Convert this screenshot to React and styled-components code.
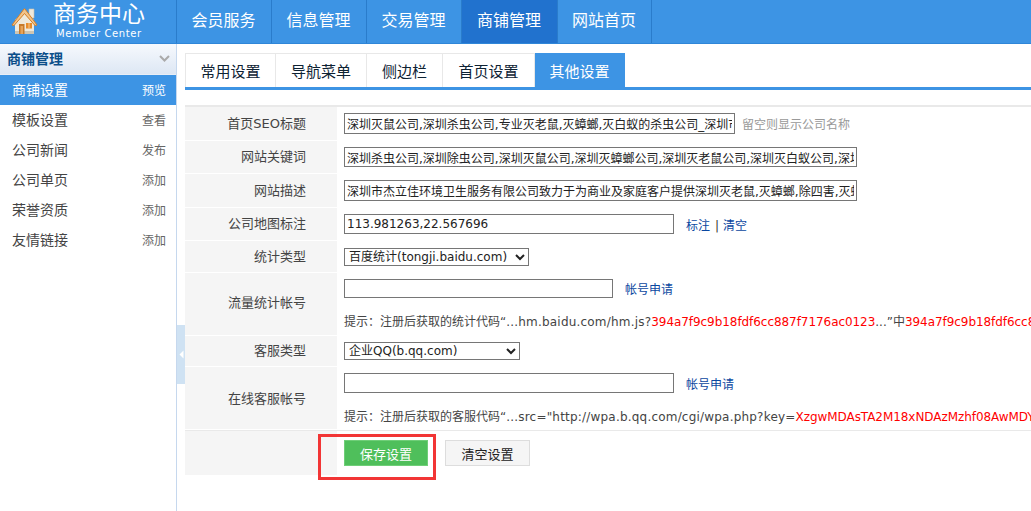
import React from 'react';
import styled, { createGlobalStyle } from 'styled-components';

const GlobalStyle = createGlobalStyle`
    html, body {
        margin: 0;
        height: 100%;
        overflow: hidden;
        background: #fff;
    }
    body {
        font-family: "DejaVu Sans", "Noto Sans CJK SC", sans-serif;
        font-size: 12px;
        color: #333;
    }
`;

const Page = styled.div`
    width: 1031px;
    height: 511px;
    display: flex;
    flex-direction: column;
    overflow: hidden;
`;

const Header = styled.header`
    height: 44px;
    flex: none;
    display: flex;
    background: #3d94e4;
    border-bottom: 1px solid #2f86d8;
    box-sizing: border-box;
`;

const Logo = styled.div`
    width: 176px;
    flex: none;
    display: flex;
    padding: 2px 0 0 11px;
    box-sizing: border-box;
    gap: 15px;
    color: #fff;
`;

const LogoText = styled.div`
    display: flex;
    flex-direction: column;
`;

const LogoTitle = styled.div`
    font-size: 23px;
    line-height: 25px;
    white-space: nowrap;
`;

const LogoSub = styled.div`
    font-size: 10px;
    line-height: 12px;
    letter-spacing: 0.6px;
    margin: 1px 0 0 3px;
    white-space: nowrap;
`;

const Nav = styled.nav`
    display: flex;
    border-right: 1px solid #2a7ccb;
`;

const NavItem = styled.div`
    width: ${p => p.$width}px;
    box-sizing: border-box;
    border-left: 1px solid #2a7ccb;
    display: flex;
    align-items: center;
    justify-content: center;
    padding: 0 1px 6px 0;
    font-size: 16px;
    color: #fff;
    background: ${p => (p.$active ? '#2172ce' : 'transparent')};
`;

const Body = styled.div`
    flex: 1;
    display: flex;
    min-height: 0;
`;

const Sidebar = styled.aside`
    width: 177px;
    flex: none;
    box-sizing: border-box;
    border-right: 1px solid #c6d8ee;
    position: relative;
`;

const SideTitle = styled.div`
    height: 31px;
    padding: 0 6px 2px 7px;
    display: flex;
    align-items: center;
    justify-content: space-between;
    font-size: 14px;
    font-weight: bold;
    color: #0b4f8a;
    background: linear-gradient(#f6f9fd, #dde7f4);
    border-bottom: 1px solid #e9eef6;
    box-sizing: border-box;
`;

const SideItem = styled.div`
    height: 30px;
    box-sizing: border-box;
    padding: 0 10px 2px 12px;
    display: flex;
    align-items: center;
    justify-content: space-between;
    font-size: 14px;
    color: ${p => (p.$active ? '#fff' : '#444')};
    background: ${p => (p.$active ? '#3d94e4' : 'transparent')};
`;

const SideAction = styled.span`
    font-size: 12px;
    color: ${p => (p.$active ? '#fff' : '#666')};
`;

const Handle = styled.div`
    position: absolute;
    left: 177px;
    top: 281px;
    width: 8px;
    height: 59px;
    background: #cfe2f3;
    display: flex;
    align-items: center;
    justify-content: center;
`;

const Main = styled.main`
    flex: 1;
    min-width: 0;
    padding: 9px 0 0 8px;
    position: relative;
`;

const Tabs = styled.div`
    display: flex;
    height: 37px;
    box-sizing: border-box;
    border-bottom: 3px solid #3d94e4;
`;

const Tab = styled.div`
    width: ${p => p.$width}px;
    border: 1px solid #e8e8e8;
    border-width: 1px 1px 0 ${p => (p.$first ? '1px' : '0')};
    box-sizing: border-box;
    display: flex;
    align-items: center;
    justify-content: center;
    padding-bottom: 1px;
    font-size: 15px;
    color: ${p => (p.$active ? '#fff' : '#0d2233')};
    background: ${p => (p.$active ? '#3d94e4' : '#fff')};
    border-color: ${p => (p.$active ? '#3d94e4' : '#e8e8e8')};
`;

const Form = styled.div`
    margin-top: 15px;
    border-top: 2px solid #e9e9e9;
`;

const Row = styled.div`
    display: flex;
    height: ${p => p.$height}px;
    margin-bottom: 1px;
`;

const Label = styled.div`
    width: 152px;
    flex: none;
    box-sizing: border-box;
    background: #f5f5f5;
    padding: 0 31px ${p => p.$lift || 3}px 0;
    display: flex;
    align-items: center;
    justify-content: flex-end;
    font-size: 13px;
    color: #444;
    white-space: nowrap;
`;

const Value = styled.div`
    flex: 1;
    min-width: 0;
    padding-left: 7px;
    display: flex;
    align-items: center;
    white-space: nowrap;
`;

const StackValue = styled(Value)`
    flex-direction: column;
    align-items: flex-start;
    padding-top: 6px;
    gap: 17px;
`;

const Line = styled.div`
    display: flex;
    align-items: center;
    white-space: nowrap;
`;

const Input = styled.input`
    width: ${p => p.$width}px;
    height: ${p => p.$height || 20}px;
    box-sizing: border-box;
    border: 1px solid #767676;
    padding: 0 2px;
    margin: 0;
    font: 12px "DejaVu Sans", "Noto Sans CJK SC", sans-serif;
    color: #222;
    background: #fff;
    outline: none;
`;

const Select = styled.select`
    width: ${p => p.$width}px;
    height: 18px;
    box-sizing: border-box;
    border: 1px solid #767676;
    border-radius: 0;
    padding: 0;
    margin: 0;
    font: 12px "DejaVu Sans", "Noto Sans CJK SC", sans-serif;
    color: #222;
    background: #fff;
`;

const Hint = styled.span`
    margin-left: 7px;
    color: #999;
`;

const Links = styled.span`
    margin-left: 12px;
    color: #333;
`;

const LinkText = styled.a`
    color: #0a47a0;
    text-decoration: none;
`;

const Divider = styled.span`
    margin: 0 4px 0 5px;
`;

const Tip = styled.div`
    color: #444;
    line-height: 14px;
`;

const Url = styled.span`
    letter-spacing: 0.2px;
`;

const Red = styled.span`
    color: #f00;
    letter-spacing: -0.06px;
`;

const Footer = styled.div`
    display: flex;
    border-top: 1px solid #e9e9e9;
    height: 44px;
`;

const FooterGap = styled.div`
    width: 152px;
    flex: none;
    background: #f5f5f5;
`;

const Buttons = styled.div`
    padding: 9px 0 0 7px;
    display: flex;
    gap: 17px;
    align-items: flex-start;
`;

const Button = styled.button`
    width: ${p => p.$width}px;
    height: 26px;
    margin: 0;
    padding: 0;
    box-sizing: border-box;
    font: 13px "DejaVu Sans", "Noto Sans CJK SC", sans-serif;
    color: ${p => (p.$primary ? '#fff' : '#222')};
    background: ${p => (p.$primary ? '#4fbf5b' : '#f5f5f5')};
    border: 1px solid ${p => (p.$primary ? '#6fce78' : '#ddd')};
`;

const Annotation = styled.div`
    position: absolute;
    left: 141px;
    top: 390px;
    width: 118px;
    height: 46px;
    box-sizing: border-box;
    border: 3px solid #f23535;
    pointer-events: none;
`;

const HouseSvg = styled.svg`
    margin-top: 5px;
    flex: none;
`;

const HouseIcon = () => (
    <HouseSvg width="27" height="27" viewBox="0 0 27 27">
        <path d="M18 2 H23 V11 H18 Z" fill="#eee9dc" stroke="#c9bda6" strokeWidth="0.6" />
        <path d="M4 13 L13 4 L23 13 V26 Q23 27 22 27 H5 Q4 27 4 26 Z" fill="#efe9da" />
        <path d="M4 24 H23 V26 Q23 27 22 27 H5 Q4 27 4 26 Z" fill="#cfc5b1" />
        <path d="M1 18 L13 2 Q13.5 1.5 14 2 L26 18 L24 18.5 L13.5 6.5 L3 18.5 Z" fill="#f2c48a" stroke="#d67f24" strokeWidth="1" strokeLinejoin="round" />
        <rect x="8" y="17" width="5.5" height="10" fill="#c67a2a" />
        <rect x="9.5" y="19" width="2.5" height="8" fill="#e8a458" />
        <rect x="15" y="16" width="6" height="5.5" fill="#e88c2a" />
        <path d="M18 16 V21.5" stroke="#f6c98e" strokeWidth="1" />
    </HouseSvg>
);

const navItems = [
    ['会员服务', 95],
    ['信息管理', 95],
    ['交易管理', 95],
    ['商铺管理', 96],
    ['网站首页', 94]
];

const sideItems = [
    ['商铺设置', '预览'],
    ['模板设置', '查看'],
    ['公司新闻', '发布'],
    ['公司单页', '添加'],
    ['荣誉资质', '添加'],
    ['友情链接', '添加']
];

const tabs = [
    ['常用设置', 91],
    ['导航菜单', 91],
    ['侧边栏', 76],
    ['首页设置', 92],
    ['其他设置', 90]
];

const App = () => (
    <Page>
        <GlobalStyle />
        <Header>
            <Logo>
                <HouseIcon />
                <LogoText>
                    <LogoTitle>商务中心</LogoTitle>
                    <LogoSub>Member Center</LogoSub>
                </LogoText>
            </Logo>
            <Nav>
                {navItems.map(([item, width], i) => (
                    <NavItem key={item} $width={width} $active={i === 3}>{item}</NavItem>
                ))}
            </Nav>
        </Header>
        <Body>
            <Sidebar>
                <SideTitle>
                    商铺管理
                    <svg width="11" height="7" viewBox="0 0 11 7">
                        <path d="M1 1 L5.5 5.5 L10 1" fill="none" stroke="#aaa" strokeWidth="2" />
                    </svg>
                </SideTitle>
                {sideItems.map(([name, action], i) => (
                    <SideItem key={name} $active={i === 0}>
                        {name}
                        <SideAction $active={i === 0}>{action}</SideAction>
                    </SideItem>
                ))}
                <Handle>
                    <svg width="5" height="9" viewBox="0 0 5 9">
                        <path d="M4.5 0.5 V8.5 L0.5 4.5 Z" fill="#fff" />
                    </svg>
                </Handle>
            </Sidebar>
            <Main>
                <Tabs>
                    {tabs.map(([name, width], i) => (
                        <Tab key={name} $width={width} $first={i === 0} $active={i === 4}>{name}</Tab>
                    ))}
                </Tabs>
                <Form>
                    <Row $height={33}>
                        <Label $lift={2}>首页SEO标题</Label>
                        <Value>
                            <Input $width={391} $height={21} readOnly value="深圳灭鼠公司,深圳杀虫公司,专业灭老鼠,灭蟑螂,灭白蚁的杀虫公司_深圳市杰立佳环境卫生服务有限公司" />
                            <Hint>留空则显示公司名称</Hint>
                        </Value>
                    </Row>
                    <Row $height={32}>
                        <Label $lift={4}>网站关键词</Label>
                        <Value>
                            <Input $width={513} readOnly value="深圳杀虫公司,深圳除虫公司,深圳灭鼠公司,深圳灭蟑螂公司,深圳灭老鼠公司,深圳灭白蚁公司,深圳除四害公司,深圳灭蚊公司" />
                        </Value>
                    </Row>
                    <Row $height={33}>
                        <Label $lift={2}>网站描述</Label>
                        <Value>
                            <Input $width={513} $height={21} readOnly value="深圳市杰立佳环境卫生服务有限公司致力于为商业及家庭客户提供深圳灭老鼠,灭蟑螂,除四害,灭蚊子,灭白蚁等服务" />
                        </Value>
                    </Row>
                    <Row $height={32}>
                        <Label $lift={4}>公司地图标注</Label>
                        <Value>
                            <Input $width={330} readOnly value="113.981263,22.567696" />
                            <Links>
                                <LinkText>标注</LinkText><Divider>|</Divider><LinkText>清空</LinkText>
                            </Links>
                        </Value>
                    </Row>
                    <Row $height={31}>
                        <Label $lift={2}>统计类型</Label>
                        <Value>
                            <Select $width={185} defaultValue="baidu">
                                <option value="baidu">百度统计(tongji.baidu.com)</option>
                            </Select>
                        </Value>
                    </Row>
                    <Row $height={62}>
                        <Label $lift={6}>流量统计帐号</Label>
                        <StackValue>
                            <Line>
                                <Input $width={269} $height={19} />
                                <Links><LinkText>帐号申请</LinkText></Links>
                            </Line>
                            <Tip>
                                提示：注册后获取的统计代码“<Url>...hm.baidu.com/hm.js?</Url><Red>394a7f9c9b18fdf6cc887f7176ac0123</Red>...”中<Red>394a7f9c9b18fdf6cc887f7176ac0123</Red>
                            </Tip>
                        </StackValue>
                    </Row>
                    <Row $height={30}>
                        <Label $lift={3}>客服类型</Label>
                        <Value>
                            <Select $width={176} defaultValue="qq">
                                <option value="qq">企业QQ(b.qq.com)</option>
                            </Select>
                        </Value>
                    </Row>
                    <Row $height={62}>
                        <Label $lift={2}>在线客服帐号</Label>
                        <StackValue>
                            <Line>
                                <Input $width={330} />
                                <Links><LinkText>帐号申请</LinkText></Links>
                            </Line>
                            <Tip>
                                提示：注册后获取的客服代码“<Url>...src="http://wpa.b.qq.com/cgi/wpa.php?key=</Url><Red>XzgwMDAsTA2M18xNDAzMzhf08AwMDY</Red>
                            </Tip>
                        </StackValue>
                    </Row>
                </Form>
                <Footer>
                    <FooterGap />
                    <Buttons>
                        <Button $primary $width={84}>保存设置</Button>
                        <Button $width={85}>清空设置</Button>
                    </Buttons>
                </Footer>
                <Annotation />
            </Main>
        </Body>
    </Page>
);

export default App;
